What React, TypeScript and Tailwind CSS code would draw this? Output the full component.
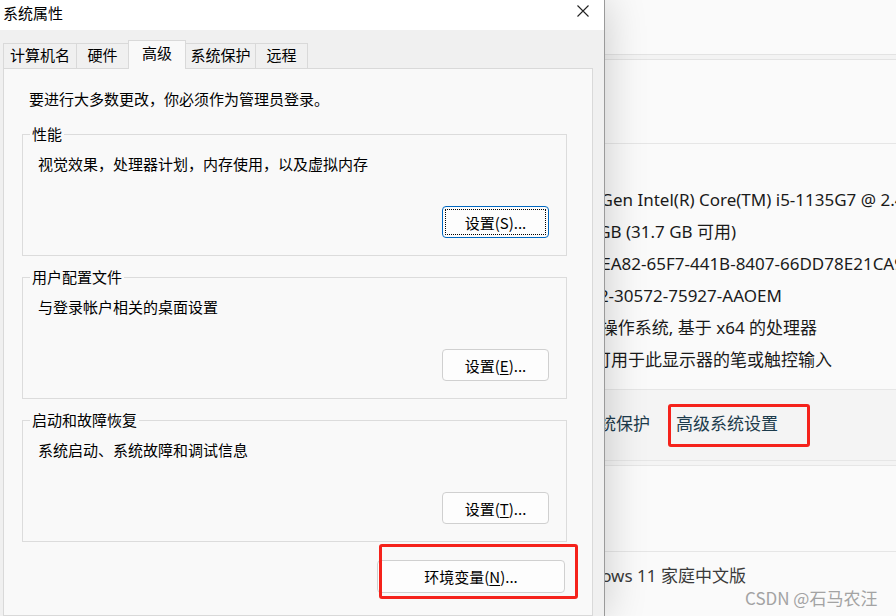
import React from 'react';

const cjk = "font-['Noto_Sans_CJK_SC','Noto_Sans',sans-serif]";

const tabs = [
  { label: '计算机名', w: 'w-[74px]' },
  { label: '硬件', w: 'w-[53px]' },
  { label: '高级', w: 'w-[58px]', active: true },
  { label: '系统保护', w: 'w-[71px]' },
  { label: '远程', w: 'w-[53px]' },
];

const specs = [
  '11th Gen Intel(R) Core(TM) i5-1135G7 @ 2.40GHz   2.42 GHz',
  '32.0 GB (31.7 GB 可用)',
  'B73CEA82-65F7-441B-8407-66DD78E21CA9',
  '00342-30572-75927-AAOEM',
  '64 位操作系统, 基于 x64 的处理器',
  '没有可用于此显示器的笔或触控输入',
];

function Key({ k }: { k: string }) {
  return (
    <>
      (<span className="underline underline-offset-2">{k}</span>)
    </>
  );
}

function SettingsButton({ children, focused }: { children: React.ReactNode; focused?: boolean }) {
  return (
    <button
      className={
        'h-[32px] w-[107px] rounded-[4px] border bg-[#fdfdfd] text-[15px] leading-none text-black ' +
        (focused
          ? 'border-[#0067c0] outline-1 outline-dotted outline-black outline-offset-[-4px]'
          : 'border-[#d0d0d0]')
      }
    >
      {children}
    </button>
  );
}

function Group({ title, text, children }: { title: string; text: string; children: React.ReactNode }) {
  return (
    <div className="relative ml-[18px] w-[545px] border border-[#dcdcdc] pl-[15px] pr-[17px] pt-[19px] pb-[17px]">
      <span className="absolute -top-[11px] left-[7px] bg-[#f9f9f9] px-[2px] leading-[20px]">{title}</span>
      <p className="leading-[20px]">{text}</p>
      <div className="mt-[32px] flex justify-end">{children}</div>
    </div>
  );
}

export default function App() {
  return (
    <div className="relative h-[616px] w-[896px] overflow-hidden bg-[#fafafa]">
      {/* 背景：设置窗口 */}
      <div className="h-full text-[17px] text-[#1a1a1a] font-['Noto_Sans','Noto_Sans_CJK_SC',sans-serif]">
        <div className="h-[54px]" />
        <div className="h-[6px] border-y border-[#e3e3e3] bg-[#f3f3f3]" />
        <div className="h-[84px] border-b border-[#e6e6e6]" />
        <div className="pl-[560px] pt-[40px]">
          {specs.map((s) => (
            <div key={s} className="h-[32px] whitespace-nowrap leading-[32px]">
              {s}
            </div>
          ))}
        </div>
        <div className="mt-[13px] flex h-[72px] items-center gap-[26px] border-y border-[#e6e6e6] bg-[#f4f4f4] pb-[3px] pl-[582px] text-[#1c3b4c]">
          <span>系统保护</span>
          <span>高级系统设置</span>
        </div>
        <div className="h-[5px] border-b border-[#e6e6e6] bg-[#f4f4f4]" />
        <div className="h-[86px] border-b border-[#e6e6e6]" />
        <div className="pl-[560px] pt-[8px] leading-[32px] text-[#3a3a3a]">Windows 11 家庭中文版</div>
      </div>

      {/* 系统属性 对话框 */}
      <div
        className={`absolute left-0 top-0 flex h-full w-[605px] flex-col border-r border-[#9a9a9a] bg-[#f0f0f0] text-[15px] text-black shadow-[0_0_40px_rgba(0,0,0,0.2)] ${cjk}`}
      >
        <div className="flex h-[30px] items-start justify-between bg-white pl-[3px] pr-[15px]">
          <span className="pt-[3px] leading-[20px]">系统属性</span>
          <svg className="mt-[5px]" width="12" height="12" viewBox="0 0 12 12">
            <path d="M0.5 0.5L11.5 11.5M11.5 0.5L0.5 11.5" stroke="#222" strokeWidth="1.1" fill="none" />
          </svg>
        </div>

        <div className="flex flex-1 flex-col pl-[3px] pr-[11px] pt-[10px]">
          <div className="flex h-[28px] items-end">
            {tabs.map((t, i) =>
              t.active ? (
                <div
                  key={t.label}
                  className={`relative z-10 -mb-px ${t.w} ${i ? '-ml-px' : ''} flex h-[29px] items-center justify-center border-x border-t border-[#d9d9d9] bg-[#f9f9f9] pb-[3px]`}
                >
                  {t.label}
                </div>
              ) : (
                <div
                  key={t.label}
                  className={`${t.w} ${i ? '-ml-px' : ''} flex h-[25px] items-center justify-center border-x border-t border-[#d9d9d9] pb-px`}
                >
                  {t.label}
                </div>
              )
            )}
          </div>

          <div className="flex-1 border border-[#d9d9d9] bg-[#f9f9f9] pt-[20px]">
            <p className="pl-[25px] leading-[20px]">要进行大多数更改，你必须作为管理员登录。</p>

            <div className="mt-[25px] flex flex-col gap-[21px]">
              <Group title="性能" text="视觉效果，处理器计划，内存使用，以及虚拟内存">
                <SettingsButton focused>设置(S)...</SettingsButton>
              </Group>
              <Group title="用户配置文件" text="与登录帐户相关的桌面设置">
                <SettingsButton>
                  设置<Key k="E" />...
                </SettingsButton>
              </Group>
              <Group title="启动和故障恢复" text="系统启动、系统故障和调试信息">
                <SettingsButton>
                  设置<Key k="T" />...
                </SettingsButton>
              </Group>
            </div>

            <div className="ml-[18px] mt-[18px] flex w-[545px] justify-end pr-[2px]">
              <button className="h-[33px] w-[188px] rounded-[4px] border border-[#d0d0d0] bg-[#fdfdfd] text-[15px] leading-none">
                环境变量<Key k="N" />...
              </button>
            </div>
          </div>
        </div>
      </div>

      {/* 标注 */}
      <div className="absolute left-[379px] top-[544px] h-[55px] w-[199px] rounded-[3px] border-[3px] border-[#f5221b]" />
      <div className="absolute left-[668px] top-[404px] h-[43px] w-[142px] rounded-[3px] border-[3px] border-[#f5221b]" />
      <span className={`absolute left-[745px] top-[585px] text-[17px] leading-[26px] text-[#a3a3a3] ${cjk}`}>
        CSDN @石马农汪
      </span>
    </div>
  );
}
